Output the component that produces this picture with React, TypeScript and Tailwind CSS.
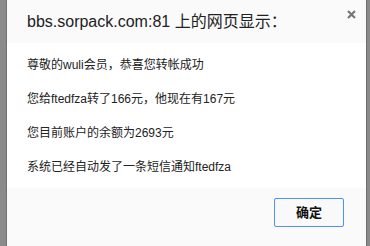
export default function App() {
  const font = { fontFamily: '"Liberation Sans", "Noto Sans CJK SC", sans-serif' };
  return (
    <div className="flex h-[246px] w-[370px] overflow-hidden" style={font}>
      <div className="w-[7px] shrink-0 border-r border-[#6f6f6f] bg-[#8a8a8a]" />
      <div className="flex w-[359px] shrink-0 flex-col">
        <div className="relative flex h-[43px] items-center bg-[#fafafa] pl-[20px] text-[16px] text-[#222]">
          <span>bbs.sorpack.com:81 上的网页显示：</span>
          <svg className="absolute right-[10px] top-[10px]" width="9" height="9" viewBox="0 0 9 9">
            <path d="M1 1L8 8M8 1L1 8" stroke="#777" strokeWidth="2.2" />
          </svg>
        </div>
        <div className="flex h-[145px] flex-col gap-[17px] bg-white pl-[20px] pt-[14px] text-[12px] leading-[17px] text-[#222]">
          <div>尊敬的wuli会员，恭喜您转帐成功</div>
          <div>您给ftedfza转了166元，他现在有167元</div>
          <div>您目前账户的余额为2693元</div>
          <div>系统已经自动发了一条短信通知ftedfza</div>
        </div>
        <div className="flex flex-1 justify-end bg-[#fafafa] pr-[22px] pt-[10px]">
          <button className="h-[29px] w-[70px] rounded-[2px] border border-[#4d90fe] bg-[#f9f9f9] text-[13px] font-bold text-[#111]">
            确定
          </button>
        </div>
      </div>
      <div className="flex-1 border-l border-[#6f6f6f] bg-[#8a8a8a]" />
    </div>
  );
}
